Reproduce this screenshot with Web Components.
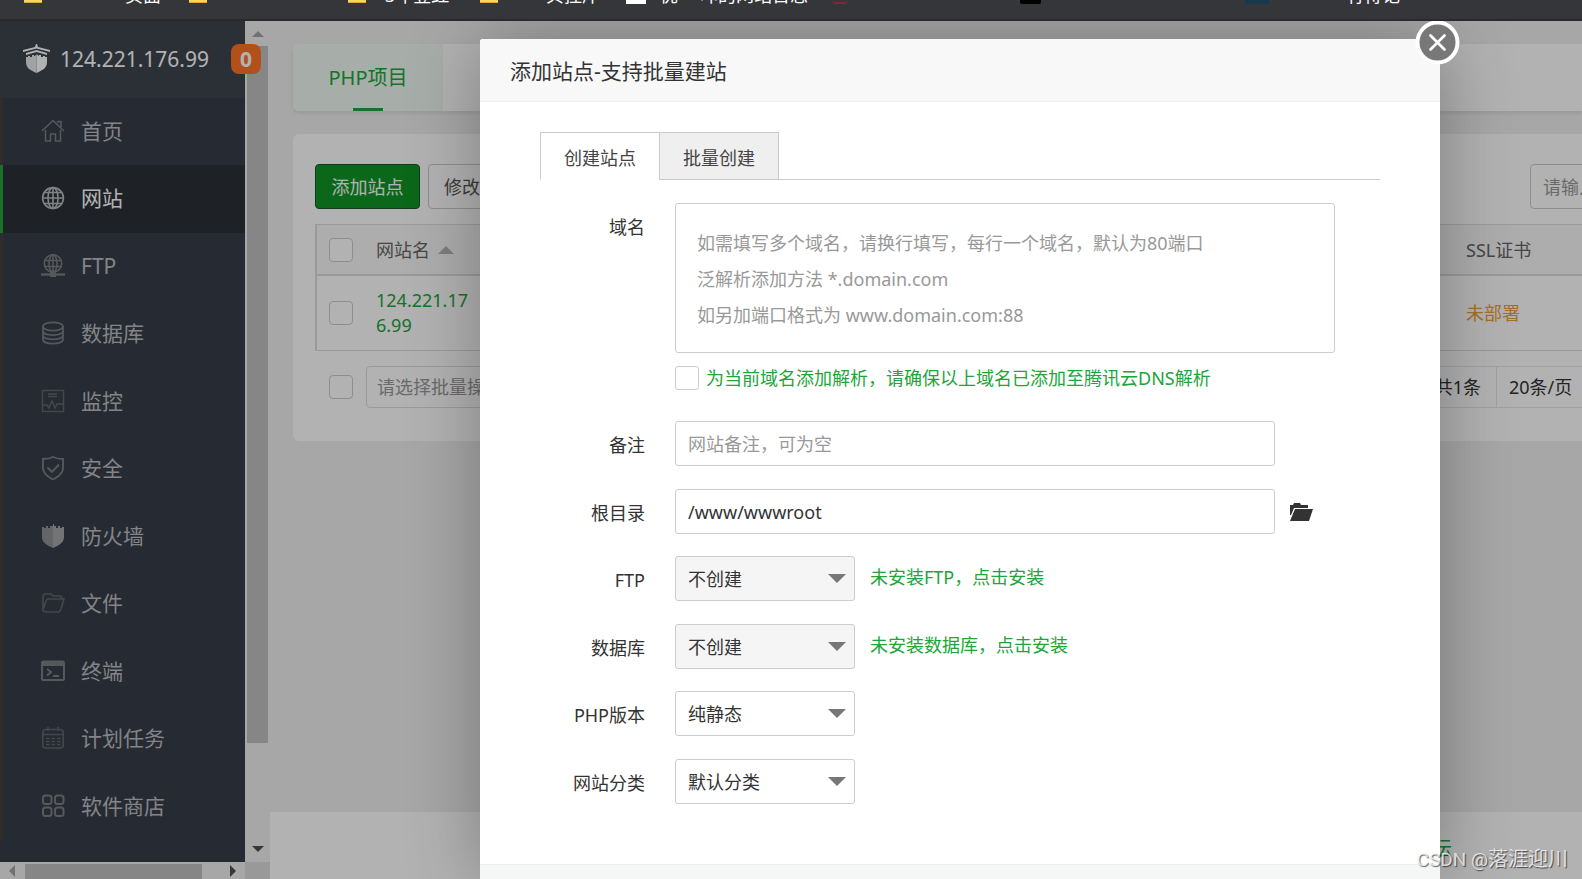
<!DOCTYPE html>
<html lang="zh-CN">
<head>
<meta charset="utf-8">
<title>网站管理</title>
<style>
  html, body { margin: 0; height: 100%; overflow: hidden; }
  body { font-family: "Noto Sans", "Noto Sans CJK SC", sans-serif; font-size: 18px; line-height: 24px; color: #333; }
</style>
</head>
<body>
<bt-app></bt-app>

<script>
const define = (name, html, setup) => {
  const template = document.createElement('template');
  template.innerHTML = html;
  customElements.define(name, class extends HTMLElement {
    connectedCallback() {
      if (this.shadowRoot) return;
      const root = this.attachShadow({ mode: 'open' });
      root.append(template.content.cloneNode(true));
      if (setup) setup(this, root);
    }
  });
};

/* ---------- icons ---------- */
const ICONS = {
  home: '<g stroke-width="1.5"><path d="M1 12 12 1.500 23 12M17 4V2.500h3V8M4.500 11v11h5v-7h5v7h5V11"/></g>',
  globe: '<g stroke-width="1.6"><circle cx="12" cy="12" r="10.400"/><ellipse cx="12" cy="12" rx="5" ry="10.400"/><path d="M12 1.500v21M1.500 12h21M3 6.500h18M3 17.500h18"/></g>',
  ftp: '<g stroke-width="1.6"><circle cx="12" cy="9.500" r="8.700"/><ellipse cx="12" cy="9.500" rx="4" ry="8.700"/><path d="M12 1v17M4 6.500h16M4 12.500h16"/><path d="M0 20.500h24" stroke-width="2.400"/><path d="M9 20.500h6" stroke-width="5"/></g>',
  db: '<g stroke-width="1.700"><ellipse cx="12" cy="5.500" rx="10" ry="4.200"/><path d="M2 5.500v13c0 5.600 20 5.600 20 0v-13M2 10c0 5.400 20 5.400 20 0M2 14.300c0 5.400 20 5.400 20 0"/></g>',
  monitor: '<g stroke-width="1.500"><path d="M1.500 1.500h21v21h-21zM2 16h4l2 3 3-7 3 7 2-4h6M7 5h9M7 7.500h9"/></g>',
  safe: '<g stroke-width="1.900"><path d="M12 1C8 3 5 3 2 3v9c0 6 5 9 10 11.500C17 21 22 18 22 12V3c-3 0-6 0-10-2zM6.500 11.500l4.500 4.500 7-7.500"/></g>',
  wall: '<g stroke="none" fill="currentColor"><path opacity=".8" d="M1 3h2v1h2V2h2v2h2V2h3v22C5 21 1 18 1 13z"/><path d="M12 0v24c7-3 11-6 11-11V3h-2v1h-2V2h-2v2h-2V2h-2V0z"/></g>',
  files: '<g stroke-width="1.600"><path d="M2 20V5q0-2 2-2h6l2 2h7q2 0 2 3M5 20q-3 1-3-1L5 10q1-2 2-2h16l-3 10q-1 3-3 3H4"/></g>',
  term: '<g stroke-width="2"><rect x="1" y="2.500" width="22" height="18.500" rx="1.500"/><path d="M1 5h22" stroke-width="4"/><path d="m6 10 4 3-4 3.500M12 17h6"/></g>',
  cron: '<g stroke-width="1.600"><rect x="1.800" y="3.500" width="20.400" height="18.500" rx="3"/><path d="M2 8.500h20M7 1v4M17 1v4M5 12.500h3.500m2 0H14m2 0h3.500M5 15.500h3.500m2 0H14m2 0h3.500M5 18.500h3.500m2 0H14m2 0h3.500"/></g>',
  store: '<g stroke-width="2"><rect x="2" y="1.500" width="8.500" height="8.500" rx="2.500"/><rect x="14" y="1.500" width="8.500" height="8.500" rx="2.500"/><rect x="2" y="13.500" width="8.500" height="8.500" rx="2.500"/><rect x="14" y="13.500" width="8.500" height="8.500" rx="2.500"/></g>'
};
customElements.define('bt-icon', class extends HTMLElement {
  static observedAttributes = ['name'];
  constructor() {
    super();
    this.attachShadow({ mode: 'open' });
  }
  attributeChangedCallback(_, __, name) {
    this.shadowRoot.innerHTML = `
      <style>
        :host { display: block; width: 24px; height: 24px; }
        svg { display: block; width: 100%; height: 100%; fill: none; stroke: currentColor; }
      </style>
      <svg viewBox="0 0 24 24" aria-hidden="true">${ICONS[name] || ''}</svg>`;
  }
});

/* ---------- browser bookmark bar ---------- */
define('bt-bookmarks', `
  <style>
    :host { display: block; height: 19px; flex: none; overflow: hidden; background: #35363a; border-bottom: 2px solid #2a2a29; color: #fff; }
    div { display: grid; align-items: end; font-size: 18px; line-height: 20px; white-space: nowrap;
      grid-template-rows: 5px;
      grid-template-columns: 24px 101px 64px 159px 37px 95px 66px 80px 34px 40px 132px 188px 225px 101px 1fr; }
    i { align-self: start; width: 18px; height: 3px; background: #f6d65b; border-bottom: 1px solid #d9a93a; box-sizing: border-box; }
    .w { width: 20px; background: #fff; height: 4px; border: 0; }
    .k { width: 21px; background: #000; height: 4px; border: 0; border-radius: 0 0 2px 2px; }
    .r { width: 16px; height: 4px; background: none; border: 0 solid #7a2b32; border-bottom-width: 2px; border-radius: 0 0 8px 8px; }
    .b { width: 24px; background: #18384e; height: 4px; border: 0; }
  </style>
  <div><span></span><i></i><span>页面</span><i></i><i></i><span>3年登红</span><i></i><span>贝捏岸</span><i class="w"></i><span>优</span><span>咔的网站日志</span><i class="r"></i><i class="k"></i><i class="b"></i><span>有待记</span></div>`);

/* ---------- sidebar ---------- */
define('bt-nav-item', `
  <style>
    :host { display: block; height: 67px; box-sizing: border-box; border-left: 3px solid #43413d; color: #bcbec0; --ic: #7c7f82; }
    :host(:nth-child(even)) { height: 68px; }
    :host([active]) { border-left-color: #20a53a; background: #2c3138; color: #fff; --ic: #b9babd; }
    :host([dim]) { --ic: #62666a; }
    :host([bright]) { --ic: #a6a6a6; }
    a { display: flex; align-items: center; gap: 16px; height: 100%; box-sizing: border-box; padding: 0 0 2px 38px; color: inherit; text-decoration: none; font-size: 21px; line-height: 28px; }
    bt-icon { color: var(--ic); }
  </style>
  <a href="#"><bt-icon></bt-icon><slot></slot></a>`,
  (el, root) => root.querySelector('bt-icon').setAttribute('name', el.getAttribute('icon')));

define('bt-sidebar', `
  <style>
    :host { display: grid; grid-template-columns: 245px 25px; grid-template-rows: minmax(0, 1fr) 17px; flex: none; background: #f0f0f0; }
    .menu { background: #373d48; overflow: visible; min-height: 0; }
    header { position: relative; display: flex; align-items: center; gap: 10px; height: 77px; padding: 0 0 2px 23px; background: #3e4550; color: #fff; font-size: 21px; line-height: 28px; box-sizing: border-box; }
    header svg { width: 27px; height: 30px; }
    .badge { position: absolute; right: -16px; top: 23px; width: 30px; height: 30px; border-radius: 8px; background: #ff7328; font-weight: 700; line-height: 30px; text-align: center; }
    nav { height: calc(100% - 77px); overflow: hidden; }
    .v { display: flex; flex-direction: column; align-items: center; justify-content: space-between; padding: 10px 0; background: #f0f0f0; }
    .v i { flex: none; width: 21px; height: 697px; background: #c1c1c1; }
    .v svg, .h svg { flex: none; display: block; }
    .v { gap: 9px; }
    .v svg:last-child { margin-top: auto; }
    .h { display: flex; align-items: center; gap: 10px; padding: 0 9px; }
    .h i { width: 177px; height: 15px; align-self: end; background: #c1c1c1; }
    .h svg:last-child { margin-left: auto; }
    .corner { background: #dcdcdc; }
  </style>
  <div class="menu">
    <header>
      <svg viewBox="0 0 27 30" fill="currentColor" aria-hidden="true"><path d="M13 0h1l1 3 12 3v2L13.500 4.500 0 8V6l12-3zM3 9l10.500-3 10.500 3v2L13.500 8 3 11z"/><path opacity=".88" d="M3 13h2v-1h2v1h2v-2h2v1l2.500-1v18C7 26 3 24 3 18z"/><path d="M13.500 10l2.500 2v-1h2v2h2v-1h2v1h2v5c0 6-4 8-10.500 11z"/></svg>
      <span>124.221.176.99</span><span class="badge">0</span>
    </header>
    <nav>
      <bt-nav-item icon="home">首页</bt-nav-item>
      <bt-nav-item icon="globe" active>网站</bt-nav-item>
      <bt-nav-item icon="ftp">FTP</bt-nav-item>
      <bt-nav-item icon="db">数据库</bt-nav-item>
      <bt-nav-item icon="monitor" dim>监控</bt-nav-item>
      <bt-nav-item icon="safe">安全</bt-nav-item>
      <bt-nav-item icon="wall" bright>防火墙</bt-nav-item>
      <bt-nav-item icon="files" dim>文件</bt-nav-item>
      <bt-nav-item icon="term">终端</bt-nav-item>
      <bt-nav-item icon="cron" dim>计划任务</bt-nav-item>
      <bt-nav-item icon="store">软件商店</bt-nav-item>
    </nav>
  </div>
  <div class="v">
    <svg width="12" height="6" fill="#a3a3a3"><path d="M0 6 6 0l6 6z"/></svg><i></i>
    <svg width="12" height="6" fill="#505050"><path d="M0 0h12L6 6z"/></svg>
  </div>
  <div class="h">
    <svg width="6" height="12" fill="#a3a3a3"><path d="M6 0v12L0 6z"/></svg><i></i>
    <svg width="6" height="12" fill="#505050"><path d="M0 0v12l6-6z"/></svg>
  </div>
  <div class="corner"></div>`);

/* ---------- site list page ---------- */
define('bt-site-page', `
  <style>
    :host { display: flex; flex-direction: column; flex: 1; min-width: 0; background: #f0f0f0; }
    main { display: flex; flex-direction: column; gap: 23px; padding: 23px 0 0 23px; flex: 1; }
    .tabs, .card { background: #fff; border-radius: 6px 0 0 6px; }
    .tabs { display: flex; height: 67px; box-shadow: 0 2px 4px rgba(0,0,0,.1); }
    .tabs a { position: relative; width: 150px; border-radius: 6px 0 0 6px; background: #f0faf3; color: #20a53a; font-size: 20px; line-height: 67px; text-align: center; text-decoration: none; }
    .tabs a::after { content: ""; position: absolute; left: 60px; bottom: 0; width: 30px; height: 3px; background: #20a53a; }
    .card { display: flex; flex-direction: column; gap: 15px; padding: 30px 0 33px 22px; }
    .bar { display: flex; gap: 8px; }
    button, input, select { font: inherit; box-sizing: border-box; border-radius: 4px; margin: 0; }
    button { height: 45px; padding: 0 15px; border: 1px solid #ccc; background: #fff; color: #555; white-space: nowrap; }
    .primary { width: 105px; background: #109527; border-color: #18582a; color: #fff; }
    .search { width: 52px; margin-left: auto; }
    .search input { width: 240px; height: 45px; padding: 0 12px; border: 1px solid #ccc; }
    .search input::placeholder { color: #999; }
    input[type=checkbox] { appearance: none; display: block; width: 24px; height: 24px; border: 1px solid #ccc; background: #fff; flex: none; }
    table { width: 100%; table-layout: fixed; border-collapse: separate; border-spacing: 0; border: 1px solid #ddd; border-left-width: 2px; border-right: 0; }
    th, td { padding: 0 12px; text-align: left; font-weight: 400; vertical-align: middle; }
    th { height: 49px; background: #f8f8f8; border-bottom: 2px solid #ddd; color: #666; }
    td { height: 74px; line-height: 25px; word-break: break-all; }
    .sort { display: inline-block; margin-left: 8px; vertical-align: 3px; border: 8px solid transparent; border-bottom-color: #b4b4b4; border-top: 0; }
    td a { color: #20a53a; text-decoration: none; }
    td .warn { color: #f0a03c; }
    .foot { display: flex; align-items: center; padding-left: 14px; gap: 13px; height: 42px; }
    .foot select { appearance: none; width: 180px; height: 42px; padding: 0 10px; border: 1px solid #ddd; background: #fff; color: #999; opacity: 1; }
    .pages { display: flex; margin-left: auto; height: 40px; line-height: 40px; border: 1px solid #e6e6e6; border-right: 0; }
    .pages span { padding: 0 15px; border-right: 1px solid #e6e6e6; }
    .pages span + span { padding: 0 0 0 12px; width: 73px; border: 0; white-space: nowrap; }
    footer { display: flex; justify-content: flex-end; height: 67px; box-sizing: border-box; padding: 25px 130px 0 0; background: #fff; }
    footer a { color: #20a53a; text-decoration: none; font-size: 20px; }
  </style>
  <main>
    <div class="tabs"><a href="#">PHP项目</a></div>
    <section class="card">
      <div class="bar">
        <button class="primary">添加站点</button><button>修改默认页</button>
        <label class="search"><input type="text" placeholder="请输入域名或备注" aria-label="搜索"></label>
      </div>
      <table>
        <colgroup><col style="width:47px"><col style="width:124px"><col><col style="width:128px"></colgroup>
        <thead><tr><th><input type="checkbox" aria-label="全选"></th><th>网站名<span class="sort"></span></th><th></th><th>SSL证书</th></tr></thead>
        <tbody><tr><td><input type="checkbox" aria-label="选择站点"></td><td><a href="#">124.221.176.99</a></td><td></td><td><a class="warn" href="#">未部署</a></td></tr></tbody>
      </table>
      <div class="foot">
        <input type="checkbox" aria-label="批量选择">
        <select aria-label="批量操作" disabled><option>请选择批量操作</option></select>
        <div class="pages"><span>共1条</span><span>20条/页</span></div>
      </div>
    </section>
  </main>
  <footer><a href="#">论坛</a></footer>`);

/* ---------- form pieces ---------- */
define('bt-field', `
  <style>
    :host { display: grid; grid-template-columns: 105px minmax(0, 1fr); column-gap: 30px; align-items: start; height: 67px; }
    :host([type=area]) { height: auto; }
    :host([tall]) { height: 68px; }
    label { text-align: right; line-height: 48px; }
    .control { display: flex; align-items: center; gap: 15px; min-width: 0; }
    input, textarea, select { box-sizing: border-box; margin: 0; border: 1px solid #ccc; border-radius: 3px; background: #fff; color: #333; font: inherit; }
    input { width: 600px; height: 45px; padding: 0 12px; }
    textarea { display: block; width: 660px; height: 150px; padding: 21px; line-height: 36px; resize: none; overflow: hidden; }
    ::placeholder { color: #999; opacity: 1; }
    .pick { position: relative; }
    select { appearance: none; display: block; width: 180px; height: 45px; padding: 0 12px; opacity: 1; }
    select:disabled { background: #f5f5f5; }
    .pick::after { content: ""; position: absolute; right: 9px; top: 18px; border: 9px solid transparent; border-top-color: #777; border-bottom: 0; pointer-events: none; }
  </style>
  <label for="c"></label><div class="control"><slot></slot></div>`,
  (el, root) => {
    const type = el.getAttribute('type');
    root.querySelector('label').textContent = el.getAttribute('label');
    const control = document.createElement({ area: 'textarea', select: 'select' }[type] || 'input');
    control.id = 'c';
    let node = control;
    if (type === 'select') {
      control.add(new Option(el.getAttribute('value')));
      control.disabled = el.hasAttribute('disabled');
      node = document.createElement('div');
      node.className = 'pick';
      node.append(control);
    } else {
      control.placeholder = el.getAttribute('hint') || '';
      control.value = el.getAttribute('value') || '';
    }
    root.querySelector('.control').prepend(node);
  });

define('bt-check', `
  <style>
    :host { display: block; }
    label { display: flex; align-items: center; gap: 7px; color: #20a53a; }
    input { appearance: none; box-sizing: border-box; width: 24px; height: 24px; margin: 0; border: 1px solid #ccc; border-radius: 3px; flex: none; }
  </style>
  <label><input type="checkbox"><span><slot></slot></span></label>`);

define('bt-link', `
  <style>:host { display: block; margin-bottom: 4px; } a { color: #20a53a; text-decoration: none; }</style>
  <a href="#"><slot></slot></a>`);

define('bt-modal', `
  <style>
    :host { position: relative; display: flex; flex-direction: column; width: 960px; background: #fff; border-radius: 3px; box-shadow: 1px 1px 75px rgba(0,0,0,.3); }
    h1 { margin: 0; height: 62px; padding: 0 30px; background: #f8f8f8; border-bottom: 1px solid #eee; border-radius: 3px 3px 0 0; font-size: 21px; font-weight: 400; line-height: 64px; color: #333; }
    .body { flex: 1; padding: 30px 60px 0; }
    footer { height: 14px; background: #f5f7f7; border-top: 1px solid #edf0f0; }
    .close { position: absolute; right: -20px; top: -19px; width: 45px; height: 45px; padding: 0; border: 0; background: none; }
    svg { display: block; }
  </style>
  <h1><slot name="title"></slot></h1>
  <div class="body"><slot></slot></div>
  <footer></footer>
  <button class="close" aria-label="关闭"><svg width="45" height="45" viewBox="0 0 45 45"><circle cx="22.500" cy="22.500" r="20" fill="#787878" stroke="#fff" stroke-width="4"/><path d="m15.500 15.500 14 14m0-14-14 14" stroke="#fff" stroke-width="2.800" stroke-linecap="round"/></svg></button>`);

define('bt-tabs', `
  <style>
    :host { display: flex; height: 48px; box-sizing: border-box; border-bottom: 1px solid #ccc; }
    button { width: 120px; height: 48px; margin: 0 -1px 0 0; padding: 4px 0 0; box-sizing: border-box; border: 1px solid #c9c9d6; background: #efefef; color: #444; font: inherit; }
    button[aria-selected=true] { background: #fff; border-bottom-color: #fff; }
  </style>
  <button role="tab" aria-selected="true">创建站点</button><button role="tab" aria-selected="false">批量创建</button>`);

define('bt-site-form', `
  <style>
    :host { display: block; }
    form { padding-top: 23px; }
    bt-check { margin: 13px 0 31px 135px; }
  </style>
  <bt-tabs></bt-tabs>
  <form>
    <bt-field type="area" label="域名" hint="如需填写多个域名，请换行填写，每行一个域名，默认为80端口&#10;泛解析添加方法 *.domain.com&#10;如另加端口格式为 www.domain.com:88"></bt-field>
    <bt-check>为当前域名添加解析，请确保以上域名已添加至腾讯云DNS解析</bt-check>
    <bt-field label="备注" hint="网站备注，可为空" tall></bt-field>
    <bt-field label="根目录" value="/www/wwwroot"><svg width="23" height="18" fill="#333" aria-hidden="true"><path d="M0 2h3l1-2h6l1 2h7v3H4L1 12H0zM5 6h18l-4 12H0z"/></svg></bt-field>
    <bt-field type="select" label="FTP" value="不创建" disabled tall><bt-link>未安装FTP，点击安装</bt-link></bt-field>
    <bt-field type="select" label="数据库" value="不创建" disabled><bt-link>未安装数据库，点击安装</bt-link></bt-field>
    <bt-field type="select" label="PHP版本" value="纯静态" tall></bt-field>
    <bt-field type="select" label="网站分类" value="默认分类"></bt-field>
  </form>`);

/* ---------- application shell ---------- */
define('bt-app', `
  <style>
    :host { display: flex; flex-direction: column; height: 100vh; overflow: hidden; }
    .frame { position: relative; display: flex; flex: 1; min-height: 0; overflow: hidden; }
    .shade { position: absolute; inset: 0; display: flex; justify-content: flex-end; padding: 18px 142px 0 0; background: rgba(0,0,0,.3); }
    .mark { position: absolute; right: 14px; bottom: 7px; color: rgba(255,255,255,.75); font: 20px/24px Roboto, "Noto Sans CJK SC", sans-serif; text-shadow: 1px 1px 1px rgba(0,0,0,.6); }
    .mark span { font-size: 19px; }
  </style>
  <bt-bookmarks></bt-bookmarks>
  <div class="frame">
    <bt-sidebar></bt-sidebar>
    <bt-site-page></bt-site-page>
    <div class="shade">
      <bt-modal><span slot="title">添加站点-支持批量建站</span><bt-site-form></bt-site-form></bt-modal>
    </div>
    <div class="mark"><span>CSDN @</span>落涯迎川</div>
  </div>`);
</script>
</body>
</html>
